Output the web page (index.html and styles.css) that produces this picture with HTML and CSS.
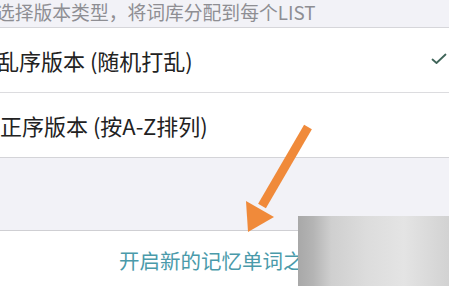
FILE: index.html
```html
<!DOCTYPE html>
<html lang="zh">
<head>
<meta charset="utf-8">
<link rel="stylesheet" href="styles.css">
</head>
<body>
<div class="page">
  <div class="header"><span class="header-text">选择版本类型，将词库分配到每个LIST</span></div>
  <div class="list">
    <div class="row"><span class="row-text">乱序版本 (随机打乱)</span>
      <svg class="check" width="16" height="12" viewBox="0 0 16 12"><path d="M1.5 6.5 L5.5 10 L14.5 1.5" fill="none" stroke="#3f6459" stroke-width="1.8" stroke-linecap="round" stroke-linejoin="round"/></svg>
    </div>
    <div class="row"><span class="row-text second">正序版本 (按A-Z排列)</span></div>
  </div>
  <div class="gap"></div>
  <div class="footer"><span class="start">开启新的记忆单词之旅</span></div>
  <div class="watermark"></div>
  <svg class="arrow" width="449" height="286" viewBox="0 0 449 286">
    <line x1="308" y1="127" x2="262" y2="206" stroke="#f08a3a" stroke-width="9" stroke-linecap="butt"/>
    <polygon points="246,201 274,217 248,232" fill="#f08a3a"/>
  </svg>
</div>
</body>
</html>
```
FILE: styles.css
```css
html, body {
  margin: 0;
  padding: 0;
  background: #f2f2f7;
}
.page {
  position: relative;
  width: 449px;
  height: 286px;
  overflow: hidden;
  font-family: "Noto Sans CJK SC", "Noto Sans", sans-serif;
  background: #f2f2f7;
}
.header {
  height: 27px;
  display: flex;
  align-items: center;
  border-bottom: 1px solid #d6d6da;
}
.header-text {
  margin-left: -4px;
  margin-top: -5px;
  font-size: 18.8px;
  color: #8e8e93;
  white-space: nowrap;
}
.list {
  background: #fff;
  border-bottom: 1px solid #d4d4d8;
}
.row {
  height: 64px;
  display: flex;
  align-items: center;
  justify-content: space-between;
  padding-right: 2px;
}
.row + .row {
  border-top: 1px solid #dcdcdf;
}
.row-text {
  margin-left: -3px;
  font-size: 22px;
  color: #222;
  white-space: nowrap;
}
.row-text.second {
  margin-left: 0;
}
.check {
  margin-right: 0;
  margin-top: -3px;
}
.gap {
  height: 72px;
}
.footer {
  border-top: 1px solid #cfcfd3;
  background: #fff;
  height: 60px;
  padding-left: 119px;
  padding-top: 14px;
  box-sizing: border-box;
}
.start {
  font-size: 20.5px;
  color: #4a9aaa;
  white-space: nowrap;
}
.watermark {
  position: absolute;
  left: 298px;
  top: 216px;
  width: 151px;
  height: 70px;
  background:
    linear-gradient(90deg, #a8a8a8 0%, #b4b4b4 10%, #cfcfcf 22%, #dcdcdc 45%, #e4e4e4 70%, #d2d2d2 100%);
}
.arrow {
  position: absolute;
  left: 0;
  top: 0;
}
```
